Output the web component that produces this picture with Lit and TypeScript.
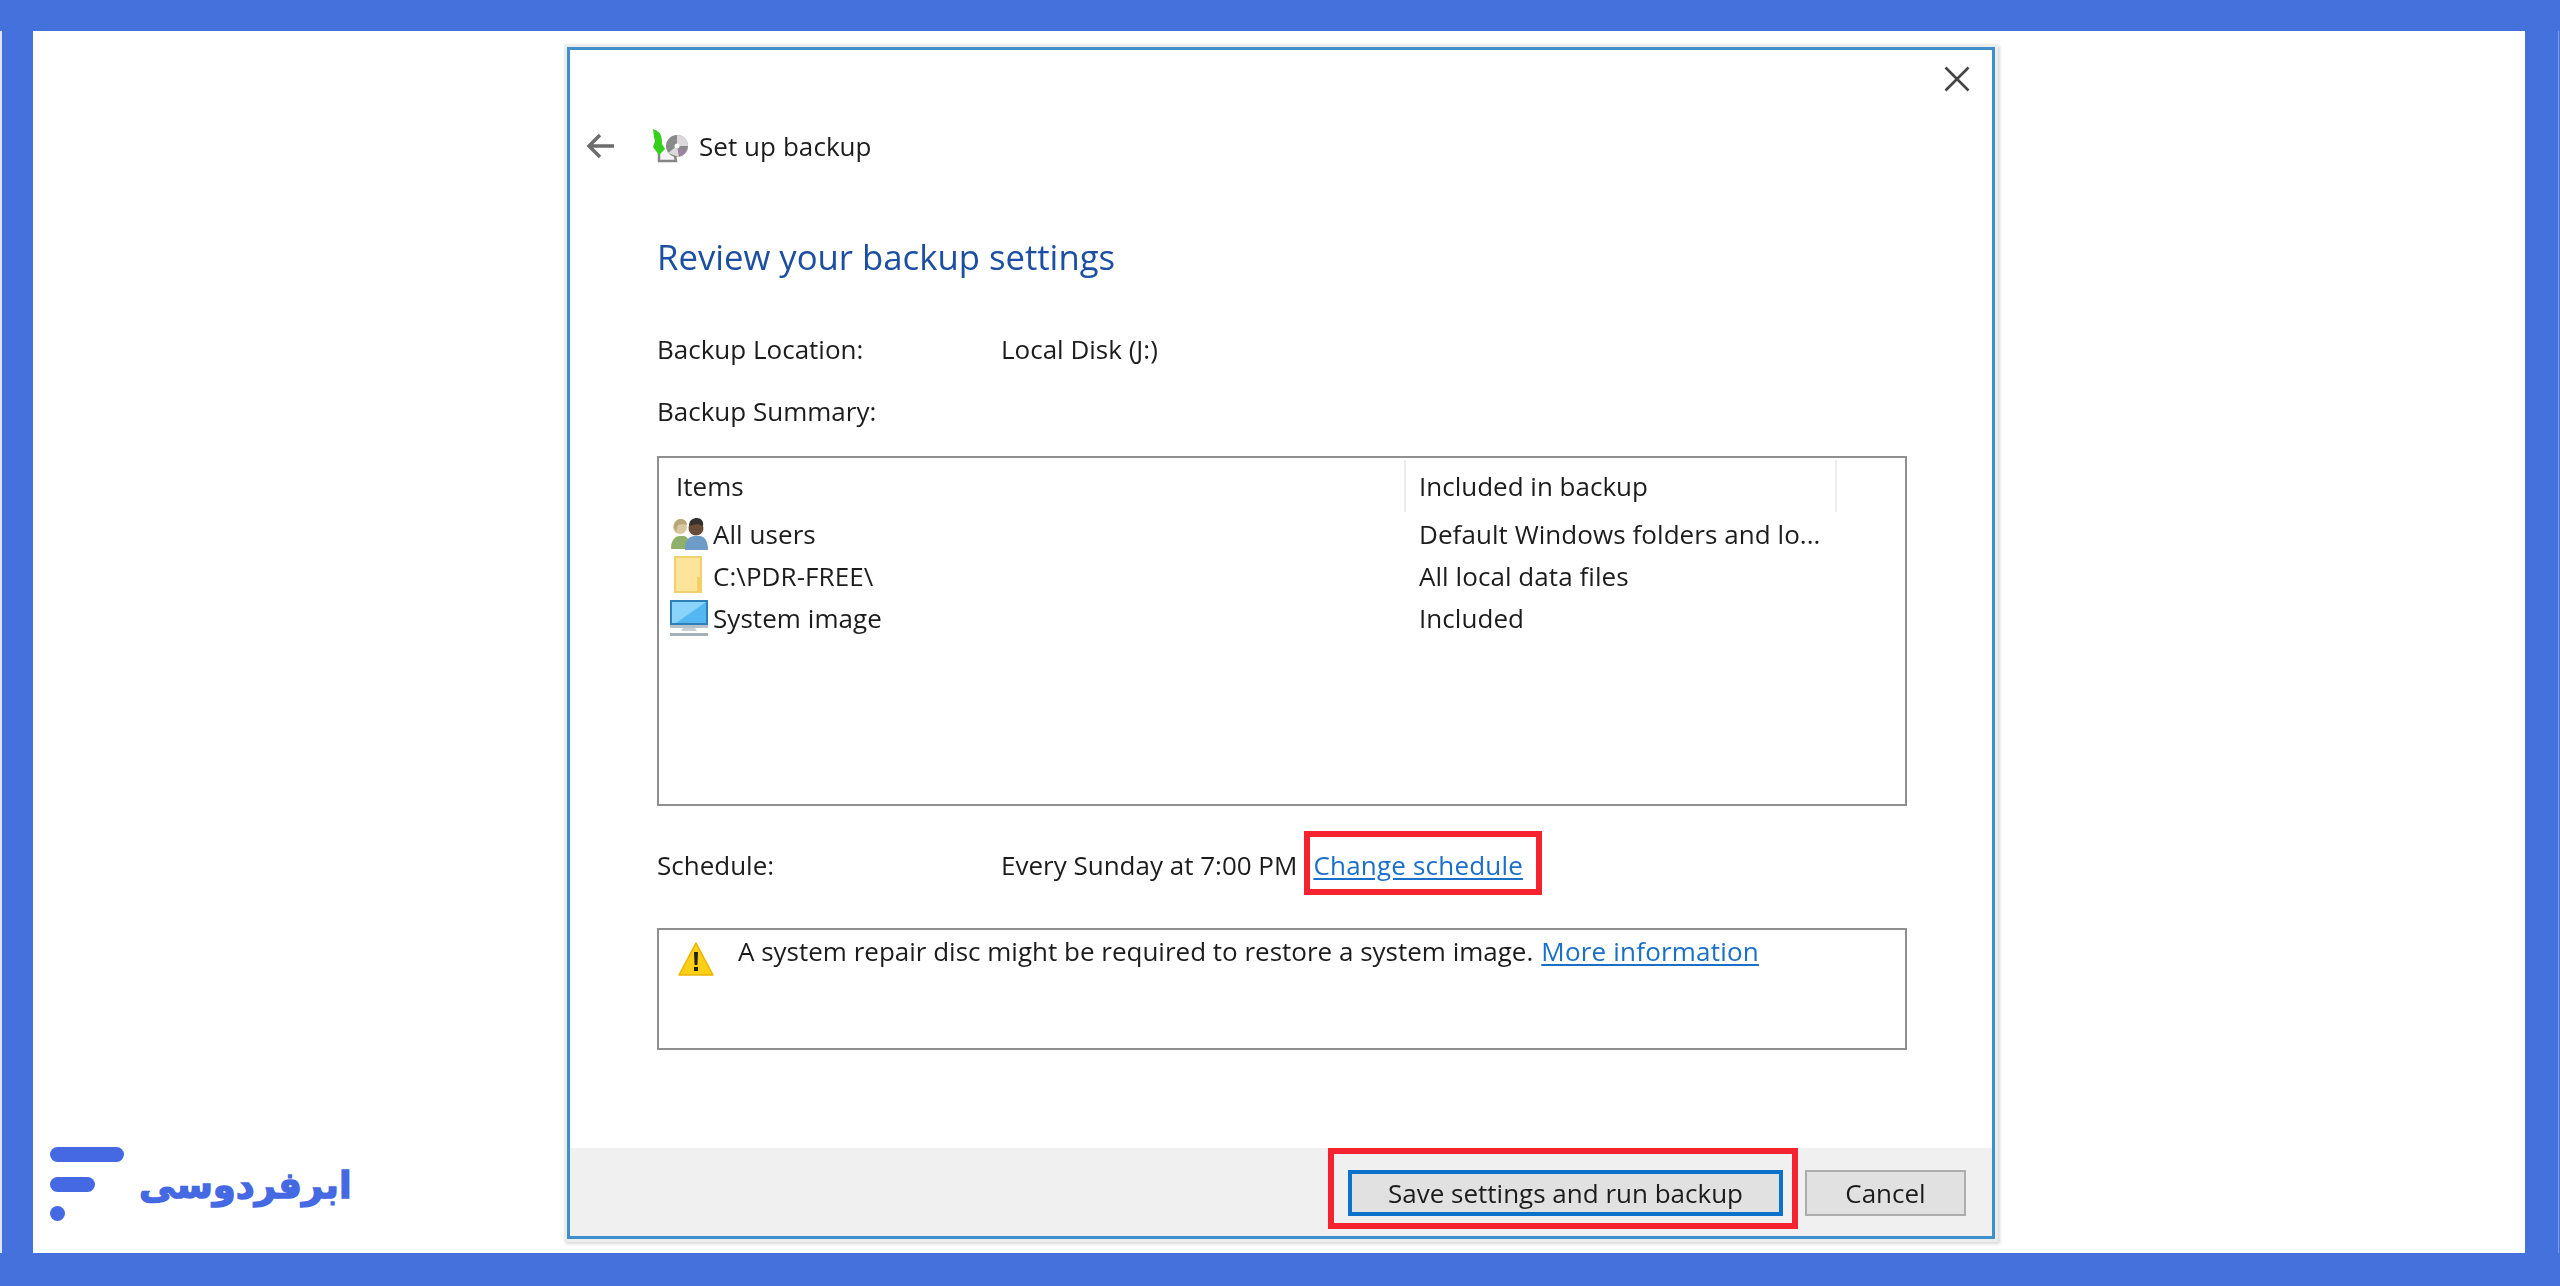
import { LitElement, html, css } from "lit";
import { customElement } from "lit/decorators.js";

const userIcon = html`<svg class="ic" width="38" height="32" viewBox="0 0 38 32">
  <path d="M1 31c0-8 3-12 8-13l5 0c4 1 6 5 6 13z" fill="#8fb069"/>
  <circle cx="10" cy="9" r="7" fill="#d9c7a0"/>
  <path d="M4 9c0-7 4-8 7-8s6 2 6 6l-4-1-5 1-2 7z" fill="#b9a777"/>
  <path d="M15 32c0-9 3-13 9-14l6 0c5 1 8 5 8 14z" fill="#6f9bc9"/>
  <circle cx="26" cy="10" r="7.5" fill="#6a4d38"/>
  <path d="M19 8c0-6 4-8 8-8s7 3 6 8l-5-2-6 1z" fill="#33302e"/>
</svg>`;
const folderIcon = html`<svg class="ic" width="38" height="40" viewBox="0 0 38 40">
  <path d="M5 1h26v35h-26z" fill="#fde49a" stroke="#f1d06e" stroke-width="2"/>
  <path d="M27 21h5v16h-5z" fill="#f4cf63"/>
</svg>`;
const monitorIcon = html`<svg class="ic" width="38" height="38" viewBox="0 0 38 38">
  <path d="M0 1h38v25H0z" fill="#2f7fb9"/>
  <path d="M2 3h34v21H2z" fill="#54b7f2"/>
  <path d="M2 3h34L6 24H2z" fill="#8ad4fb"/>
  <path d="M0 26h38v3H0z" fill="#b6c3cb"/>
  <path d="M13 29h12l2 3H11z" fill="#c9d1d6"/>
  <path d="M0 34h38v3H0z" fill="#a8b0b5"/>
</svg>`;

@customElement("app-root")
export class AppRoot extends LitElement {
  static styles = css`
    :host { display: block; position: relative; width: 2560px; height: 1286px; box-sizing: border-box;
      padding: 31px 35px 33px 33px; background: #4571dd; overflow: hidden;
      font-family: "Open Sans", "Noto Sans", sans-serif; font-size: 26px; color: #1c1c1c; }
    .edge { position: absolute; top: 31px; width: 2px; height: 1222px; background: #dde5f8; }
    .edge.l { left: 0; }
    .edge.r { right: 1px; width: 1px; background: #7f9be6; }
    .panel { height: 100%; background: #fff; display: flex; justify-content: flex-start; padding: 16px 0 0 534px; box-sizing: border-box; }
    .dialog { position: relative; width: 1428px; height: 1192px; box-sizing: border-box; border: 3px solid #3f8fcb; background: #fff;
      display: flex; flex-direction: column; box-shadow: 0 0 0 3px #ececec, 2px 2px 3px 3px #d8d8d8; filter: blur(.5px); }
    .close { position: absolute; right: 22px; top: 16px; }
    .nav { display: flex; align-items: center; height: 64px; margin-top: 64px; padding-left: 16px; }
    .nav .back { width: 30px; margin-right: 36px; }
    .nav .title { margin-left: 11px; letter-spacing: .06px; }
    .body { flex: 1; padding: 0 0 0 87px; width: 1250px; }
    h1 { margin: 56px 0 0; font-weight: 400; font-size: 34.7px; line-height: 46px; color: #1c4fa1; }
    .kv { display: grid; grid-template-columns: 344px auto 1fr; align-items: center; height: 40px; }
    .kv.loc { margin-top: 49px; }
    .kv.sum { margin-top: 22px; }
    .table { margin-top: 25px; box-sizing: border-box; height: 350px; border: 2px solid #8f8f8f; }
    .head { display: grid; grid-template-columns: 745px 433px; height: 53px; margin-top: 2px; }
    .head > div { display: flex; align-items: center; padding-left: 17px; box-sizing: border-box; height: 52px; }
    .head > .c2 { border-left: 2px solid #ececec; border-right: 2px solid #ececec; padding-left: 13px; }
    .row { display: grid; grid-template-columns: 745px 1fr; height: 42px; align-items: center; letter-spacing: .06px; }
    .row .c1 { display: flex; align-items: center; padding-left: 11px; white-space: nowrap; }
    .row .c2 { padding-left: 15px; white-space: nowrap; }
    .ic { flex: none; margin-right: 5px; }
    .sched { margin-top: 39px; }
    .sched .links { display: flex; white-space: nowrap; }
    a { color: #1a6fc9; text-decoration: underline; text-underline-offset: 3px; letter-spacing: .2px; }
    .sched a { margin-left: 16px; }
    .warn { margin-top: 43px; height: 122px; box-sizing: border-box; border: 2px solid #8f8f8f; display: flex; padding: 8px 0 0 19px; }
    .warn svg { margin: 4px 24px 0 0; flex: none; }
    .warn span { line-height: 26px; white-space: nowrap; }
    .warn a { margin-left: 8px; }
    .foot { height: 88px; background: #f0f0f0; display: flex; justify-content: flex-end; align-items: flex-start; padding: 22px 26px 0 0; gap: 22px; box-sizing: border-box; }
    .btn { box-sizing: border-box; height: 46px; display: flex; align-items: center; justify-content: center; background: #e1e1e1; border: 2px solid #adadad; }
    .btn.save { width: 435px; border: 4px solid #0a72c8; }
    .btn.cancel { width: 161px; }
    .mark { position: absolute; box-sizing: border-box; border: 6px solid #f5222f; }
    .mark.a { left: 734px; top: 781px; width: 238px; height: 64px; }
    .mark.b { left: 758px; top: 1098px; width: 470px; height: 81px; }
    .logo { position: absolute; left: 50px; top: 1147px; display: flex; gap: 15px; align-items: flex-start; color: #4469e2; }
    .logo span { font-family: "DejaVu Sans", sans-serif; font-weight: 700; font-size: 37px; line-height: 60px; margin-top: 9px; direction: rtl; -webkit-text-stroke: 1.4px #4469e2; }
  `;
  render() {
    return html`<div class="edge l"></div><div class="edge r"></div>
    <div class="panel"><div class="dialog">
      <svg class="close" width="26" height="26" viewBox="0 0 26 26"><path d="M1.500 1.500L24.500 24.500M24.500 1.500L1.500 24.500" stroke="#444" stroke-width="2.600"/></svg>
      <div class="nav">
        <svg class="back" width="30" height="26" viewBox="0 0 30 26"><path d="M28 13H3M14 2L3 13l11 11" fill="none" stroke="#6d6d6d" stroke-width="3.500"/></svg>
        <svg width="36" height="34" viewBox="0 0 36 34">
          <path d="M7 22v10h17l-2-10" fill="#f4f4f4" stroke="#858585" stroke-width="2.500"/>
          <circle cx="25" cy="17" r="11" fill="#8a8a8a"/><path d="M25 6a11 11 0 0 1 11 11H25zM16 24l9-7 2 11z" fill="#dcd8dc"/><path d="M25 17l9 6-5 4z" fill="#a080a8"/><circle cx="25" cy="17" r="2.500" fill="#fff"/>
          <path d="M1 0c3 1 7 3 8 7 1 3 1 6 1 8l3 5-6 6-6-8 2-6-1-4z" fill="#35d01c"/>
        </svg>
        <div class="title">Set up backup</div>
      </div>
      <div class="body">
        <h1>Review your backup settings</h1>
        <div class="kv loc"><span>Backup Location:</span><span>Local Disk (J:)</span></div>
        <div class="kv sum"><span>Backup Summary:</span></div>
        <div class="table">
          <div class="head"><div>Items</div><div class="c2">Included in backup</div></div>
          <div class="row"><div class="c1">${userIcon}All users</div><div class="c2">Default Windows folders and lo...</div></div>
          <div class="row"><div class="c1">${folderIcon}C:\\PDR-FREE\\</div><div class="c2">All local data files</div></div>
          <div class="row"><div class="c1">${monitorIcon}System image</div><div class="c2">Included</div></div>
        </div>
        <div class="kv sched"><span>Schedule:</span><span class="links">Every Sunday at 7:00 PM<a href="#">Change schedule</a></span></div>
        <div class="warn">
          <svg width="36" height="34" viewBox="0 0 36 34"><path d="M18 1L35 33H1z" fill="#fdd017" stroke="#e9b400" stroke-width="1.500" stroke-linejoin="round"/><path d="M16 10h4l-.6 13h-2.800z" fill="#222"/><rect x="16" y="25" width="4" height="4" fill="#222"/></svg>
          <span>A system repair disc might be required to restore a system image.<a href="#">More information</a></span>
        </div>
      </div>
      <div class="foot"><div class="btn save">Save settings and run backup</div><div class="btn cancel">Cancel</div></div>
      <div class="mark a"></div><div class="mark b"></div>
    </div></div>
    <div class="logo">
      <svg width="74" height="74" viewBox="0 0 74 74"><rect width="74" height="15" rx="7.500" fill="#4469e2"/><rect y="30" width="45" height="15" rx="7.500" fill="#4469e2"/><circle cx="7.500" cy="66.500" r="7.500" fill="#4469e2"/></svg>
      <span>ابرفردوسی</span>
    </div>`;
  }
}
